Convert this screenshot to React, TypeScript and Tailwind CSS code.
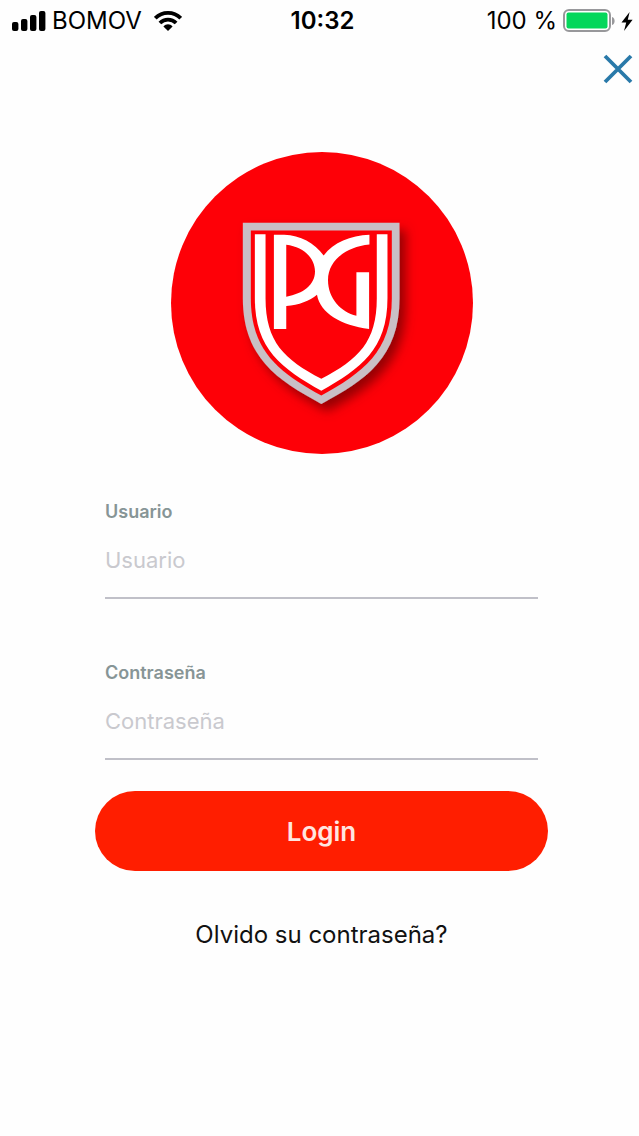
import React, { useState } from 'react';

interface FieldProps {
  id: string;
  label: string;
  type: 'text' | 'password';
  value: string;
  onChange: (value: string) => void;
}

function SignalBars() {
  return (
    <svg viewBox="0 0 34 20" className="h-5 w-[34px]" fill="currentColor" aria-hidden="true">
      <rect x="0" y="11" width="6.4" height="9" rx="2" />
      <rect x="9" y="8" width="6.4" height="12" rx="2" />
      <rect x="18" y="4" width="6.4" height="16" rx="2" />
      <rect x="27" y="0" width="6.4" height="20" rx="2" />
    </svg>
  );
}

function WifiIcon() {
  return (
    <svg viewBox="0 0 28 20" className="h-5 w-7" fill="none" stroke="currentColor" strokeWidth="3.8" aria-hidden="true">
      <path d="M1.3 7.2C8.2 0.2 19.8 0.2 26.7 7.2" />
      <path d="M5.9 12C10.4 7.4 17.6 7.4 22.1 12" />
      <path d="M9.4 15.4C12 12.6 16 12.6 18.6 15.4L14 20Z" fill="currentColor" stroke="none" />
    </svg>
  );
}

function BatteryIcon() {
  return (
    <svg viewBox="0 0 52 24" className="h-6 w-[52px]" aria-hidden="true">
      <rect x="1" y="1" width="46" height="21" rx="5" fill="#fff" stroke="#98989b" strokeWidth="2" />
      <rect x="3.5" y="3.5" width="41" height="16" rx="2" fill="#04d75b" />
      <path d="M49 8C52.5 9 52.5 15 49 16Z" fill="#98989b" />
    </svg>
  );
}

function BoltIcon() {
  return (
    <svg viewBox="0 0 12 19" className="h-[19px] w-3" fill="currentColor" aria-hidden="true">
      <path d="M8.6 0L0.5 10.6H5.2L3 19L11.6 7.8H6.8Z" />
    </svg>
  );
}

function StatusBar() {
  return (
    <header className="grid grid-cols-[1fr_auto_1fr] items-center h-[42px] pl-3 pr-[6px] text-2xl text-black">
      <div className="flex items-center gap-[6px]">
        <SignalBars />
        <span>BOMOV</span>
        <span className="ml-[6px]">
          <WifiIcon />
        </span>
      </div>
      <time className="font-semibold">10:32</time>
      <div className="flex items-center justify-end gap-[6px]">
        <span>100 %</span>
        <BatteryIcon />
        <BoltIcon />
      </div>
    </header>
  );
}

function Logo() {
  return (
    <svg viewBox="-179 -173 904 904" className="w-[302px] h-[302px]" role="img" aria-label="PG">
      <defs>
        <filter id="shield-shadow" x="-20%" y="-20%" width="150%" height="150%">
          <feDropShadow dx="18" dy="22" stdDeviation="16" floodColor="#5c0000" floodOpacity="0.65" />
        </filter>
      </defs>
      <circle cx="273" cy="279" r="452" fill="#fe0007" />
      {/* Shield */}
      <path
        d="M36 39H505V265C505 440 405 510 271 581C137 510 36 440 36 265Z"
        fill="#c9bfc5"
        filter="url(#shield-shadow)"
      />
      <path d="M60 62H482V265C482 425 394 488 271 556C148 488 60 425 60 265Z" fill="#fe0007" />
      <path
        d="M72 73H104V265C104 396 160 448 271 506C382 448 437 396 437 265V73H469V265C469 418 388 476 271 542C154 476 72 418 72 265Z"
        fill="#fff"
      />
      {/* Monogram */}
      <path
        fillRule="evenodd"
        d="M129 75H160C208 77 250 99 278 137C308 98 358 77 415 75V104C340 112 291 155 291 210C291 266 330 306 376 317V187H414V357C330 345 268 310 258 254C236 272 204 285 166 288V357H129ZM166 105V260C217 252 252 224 252 185C252 144 217 111 166 105Z"
        fill="#fff"
      />
    </svg>
  );
}

function Field({ id, label, type, value, onChange }: FieldProps) {
  return (
    <div className="flex flex-col mx-[10px]">
      <label htmlFor={id} className="text-lg leading-6 font-semibold text-[#879596]">
        {label}
      </label>
      <input
        id={id}
        type={type}
        placeholder={label}
        value={value}
        onChange={e => onChange(e.target.value)}
        className="w-full h-[75px] pb-[2px] border-b-2 border-[#c0c0c8] bg-transparent text-[22px] text-black placeholder:text-[#c9c9ce] outline-none"
      />
    </div>
  );
}

export default function App() {
  const [user, setUser] = useState('');
  const [password, setPassword] = useState('');

  return (
    <div className="min-h-screen bg-[#fefefe] font-[Inter,sans-serif]">
      <StatusBar />

      <div className="flex justify-end pt-3 pr-[6px]">
        <button type="button" aria-label="Cerrar" className="text-[#2979a9]">
          <svg viewBox="0 0 30 30" className="w-[30px] h-[30px]" stroke="currentColor" strokeWidth="3.8" aria-hidden="true">
            <path d="M2 2L28 28M28 2L2 28" />
          </svg>
        </button>
      </div>

      <main className="flex flex-col items-center pt-[68px] pl-[95px] pr-[91px]">
        <Logo />

        <form className="w-full flex flex-col mt-[46px]" onSubmit={e => e.preventDefault()}>
          <div className="flex flex-col gap-[62px]">
            <Field id="user" label="Usuario" type="text" value={user} onChange={setUser} />
            <Field id="password" label="Contraseña" type="password" value={password} onChange={setPassword} />
          </div>
          <button
            type="submit"
            className="w-full h-20 mt-[31px] rounded-full bg-[#ff1e00] text-[26px] font-semibold text-[#ffe6e0]"
          >
            Login
          </button>
        </form>

        <a href="#recuperar" className="mt-12 text-2xl text-[#111]">
          Olvido su contraseña?
        </a>
      </main>
    </div>
  );
}
